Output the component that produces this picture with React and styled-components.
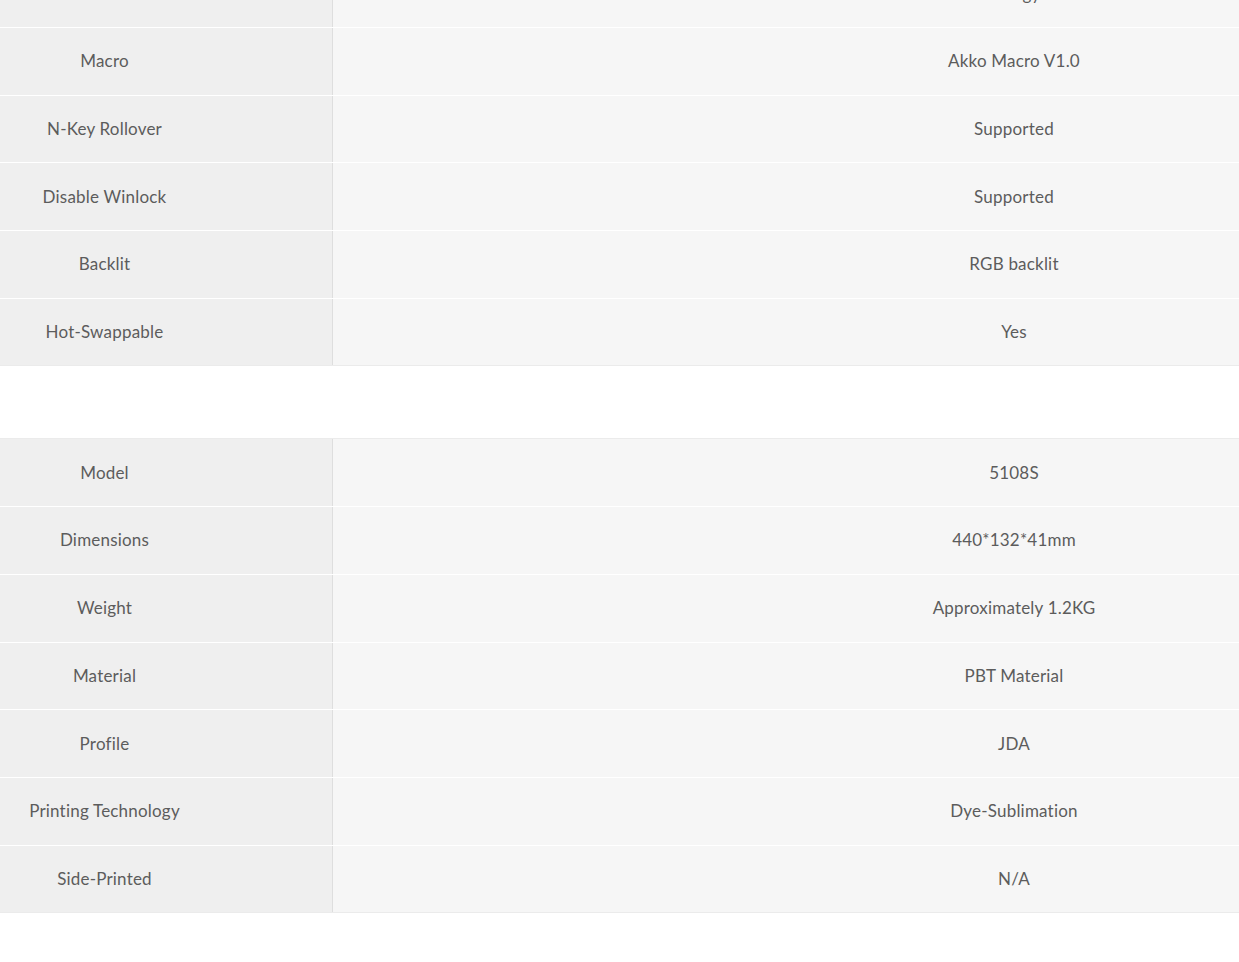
import React from "react";
import styled, { createGlobalStyle } from "styled-components";

const GlobalStyle = createGlobalStyle`
  body {
    margin: 0;
    background: #ffffff;
    font-family: 'Lato', 'Noto Sans', sans-serif;
    overflow: hidden;
  }
`;

const firstSpecs = [
  ["Mode", "Energy"],
  ["Macro", "Akko Macro V1.0"],
  ["N-Key Rollover", "Supported"],
  ["Disable Winlock", "Supported"],
  ["Backlit", "RGB backlit"],
  ["Hot-Swappable", "Yes"],
];

const secondSpecs = [
  ["Model", "5108S"],
  ["Dimensions", "440*132*41mm"],
  ["Weight", "Approximately 1.2KG"],
  ["Material", "PBT Material"],
  ["Profile", "JDA"],
  ["Printing Technology", "Dye-Sublimation"],
  ["Side-Printed", "N/A"],
];

function SpecTable({ rows, first }) {
  return (
    <Table $first={first}>
      {rows.map(([label, value]) => (
        <Row key={label}>
          <Label>{label}</Label>
          <Value>{value}</Value>
        </Row>
      ))}
    </Table>
  );
}

export default function App() {
  return (
    <Page>
      <GlobalStyle />
      <SpecTable rows={firstSpecs} first />
      <SpecTable rows={secondSpecs} />
    </Page>
  );
}

const Page = styled.div`
  display: flex;
  flex-direction: column;
  gap: 72px;
  width: 1239px;
`;

const Table = styled.div`
  display: flex;
  flex-direction: column;
  border-top: 1px solid #ebebeb;
  border-bottom: 1px solid #ebebeb;
  margin-top: ${(p) => (p.$first ? "-40.7px" : "0")};
`;

const Row = styled.div`
  display: grid;
  grid-template-columns: 333px 1fr;
  height: 66.7px;
  & + & {
    border-top: 1px solid #ffffff;
  }
`;

const Cell = styled.div`
  display: flex;
  align-items: center;
  justify-content: center;
  padding-bottom: 1px;
  font-size: 17px;
  color: #5c5c5c;
  letter-spacing: 0.2px;
  white-space: nowrap;
`;

const Label = styled(Cell)`
  background: #efefef;
  border-right: 1px solid #dedede;
  padding-right: 123px;
`;

const Value = styled(Cell)`
  background: #f6f6f6;
  padding-left: 456px;
`;
